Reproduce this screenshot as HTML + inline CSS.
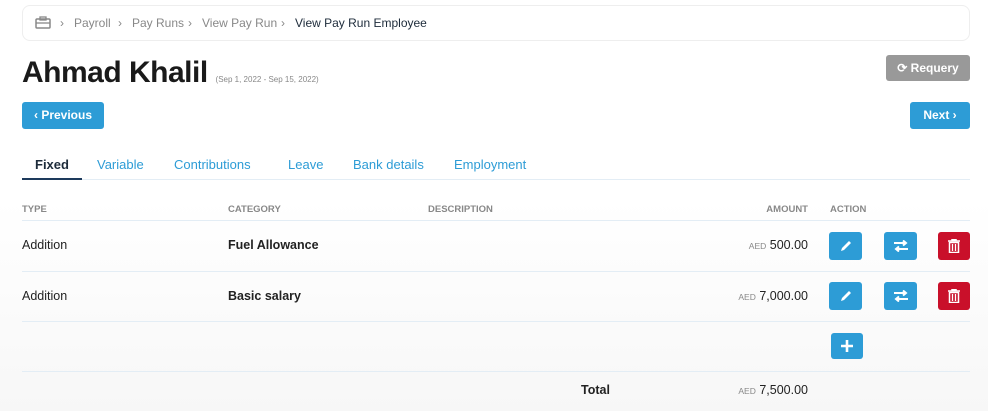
<!DOCTYPE html><html><head><style>
body{margin:0;width:988px;height:411px;overflow:hidden;font-family:"Liberation Sans",sans-serif;background:linear-gradient(#fff 0,#fff 200px,#f7f7f7 411px);position:relative;color:#222}
.a{position:absolute}
.bc{left:22px;top:5px;width:946px;height:34px;border:1px solid #eee;border-radius:8px;background:#fff;font-size:12px;color:#888;line-height:34px}
.bc span{position:absolute;top:0}
.btn{position:absolute;color:#fff;font-weight:bold;font-size:12px;border-radius:3px;text-align:center;background:#2d9cd6}
.th{font-size:9.5px;font-weight:bold;color:#888;top:204px}
.line{position:absolute;left:22px;width:948px;height:1px;background:#e3edf5}
.cell{position:absolute;font-size:12.5px}
.ib{position:absolute;width:33px;height:28px;border-radius:3px;background:#2d9cd6;display:flex;align-items:center;justify-content:center}
.tab{position:absolute;top:157px;font-size:13px;color:#2d9cd6}
.aed{font-size:8.5px;color:#888}
</style></head><body>
<div class="a bc"><span style="left:12px">
<svg width="16" height="13" viewBox="0 0 16 13" style="vertical-align:-2px"><rect x="1" y="3" width="14" height="9" rx="1" fill="none" stroke="#888" stroke-width="1.5"/><rect x="5" y="1" width="6" height="3" fill="none" stroke="#888" stroke-width="1.3"/><line x1="1" y1="7" x2="15" y2="7" stroke="#888" stroke-width="1.3"/></svg></span>
<span style="left:37px">›</span><span style="left:51px">Payroll</span><span style="left:95px">›</span><span style="left:109px">Pay Runs</span><span style="left:165px">›</span><span style="left:179px">View Pay Run</span><span style="left:258px">›</span><span style="left:272px;color:#1d2b3a">View Pay Run Employee</span></div>
<div class="a" style="left:22px;top:56px;font-size:30px;font-weight:bold;color:#1a1a1a;letter-spacing:-0.5px">Ahmad Khalil <span style="font-size:8px;color:#888;font-weight:normal;letter-spacing:0">(Sep 1, 2022 - Sep 15, 2022)</span></div>
<div class="btn" style="left:886px;top:55px;width:84px;height:26px;line-height:26px;background:#999">⟳ Requery</div>
<div class="btn" style="left:22px;top:102px;width:82px;height:27px;line-height:27px">‹ Previous</div>
<div class="btn" style="left:910px;top:102px;width:60px;height:27px;line-height:27px">Next ›</div>
<div class="tab" style="left:35px;color:#1d2b3a;font-weight:bold">Fixed</div>
<div class="tab" style="left:97px">Variable</div>
<div class="tab" style="left:174px">Contributions</div>
<div class="tab" style="left:288px">Leave</div>
<div class="tab" style="left:353px">Bank details</div>
<div class="tab" style="left:454px">Employment</div>
<div class="line" style="top:179px"></div>
<div class="a" style="left:22px;top:178px;width:60px;height:2px;background:#1d3a5c"></div>
<div class="a th" style="left:22px">TYPE</div><div class="a th" style="left:228px">CATEGORY</div><div class="a th" style="left:428px">DESCRIPTION</div>
<div class="a th" style="left:700px;width:108px;text-align:right">AMOUNT</div><div class="a th" style="left:830px">ACTION</div>
<div class="line" style="top:220px"></div><div class="line" style="top:271px"></div><div class="line" style="top:321px"></div><div class="line" style="top:371px"></div>
<div class="cell" style="left:22px;top:238px">Addition</div><div class="cell" style="left:228px;top:238px;font-weight:bold">Fuel Allowance</div>
<div class="cell" style="left:650px;top:238px;width:158px;text-align:right"><span class="aed">AED</span> 500.00</div>
<div class="cell" style="left:22px;top:289px">Addition</div><div class="cell" style="left:228px;top:289px;font-weight:bold">Basic salary</div>
<div class="cell" style="left:650px;top:289px;width:158px;text-align:right"><span class="aed">AED</span> 7,000.00</div>
<div class="cell" style="left:581px;top:383px;font-weight:bold">Total</div>
<div class="cell" style="left:650px;top:383px;width:158px;text-align:right"><span class="aed">AED</span> 7,500.00</div>
<div class="ib" style="left:829px;top:232px"><svg width="14" height="14" viewBox="0 0 14 14"><path d="M2 12l1-3 7-7 2 2-7 7z" fill="#fff"/></svg></div>
<div class="ib" style="left:884px;top:232px"><svg width="16" height="12" viewBox="0 0 16 12"><path d="M1 3h11M10 0.5l3 2.5-3 2.5M15 9H4M6 6.5L3 9l3 2.5" stroke="#fff" stroke-width="2" fill="none"/></svg></div>
<div class="ib" style="left:938px;top:232px;width:32px;background:#c9102a"><svg width="12" height="14" viewBox="0 0 12 14"><path d="M0 2h12M4 2V0.5h4V2" stroke="#fff" stroke-width="1.5" fill="none"/><rect x="1.5" y="3.5" width="9" height="10" fill="none" stroke="#fff" stroke-width="1.5"/><path d="M4.5 5v7M7.5 5v7" stroke="#fff" stroke-width="1.3"/></svg></div>
<div class="ib" style="left:829px;top:282px"><svg width="14" height="14" viewBox="0 0 14 14"><path d="M2 12l1-3 7-7 2 2-7 7z" fill="#fff"/></svg></div>
<div class="ib" style="left:884px;top:282px"><svg width="16" height="12" viewBox="0 0 16 12"><path d="M1 3h11M10 0.5l3 2.5-3 2.5M15 9H4M6 6.5L3 9l3 2.5" stroke="#fff" stroke-width="2" fill="none"/></svg></div>
<div class="ib" style="left:938px;top:282px;width:32px;background:#c9102a"><svg width="12" height="14" viewBox="0 0 12 14"><path d="M0 2h12M4 2V0.5h4V2" stroke="#fff" stroke-width="1.5" fill="none"/><rect x="1.5" y="3.5" width="9" height="10" fill="none" stroke="#fff" stroke-width="1.5"/><path d="M4.5 5v7M7.5 5v7" stroke="#fff" stroke-width="1.3"/></svg></div>
<div class="ib" style="left:831px;top:333px;width:32px;height:26px"><svg width="12" height="12" viewBox="0 0 12 12"><path d="M6 0v12M0 6h12" stroke="#fff" stroke-width="2.6"/></svg></div>
</body></html>
